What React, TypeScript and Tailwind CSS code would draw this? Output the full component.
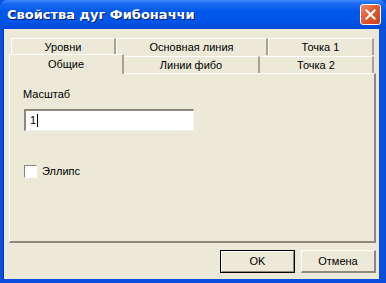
import React from "react";

const font = { fontFamily: '"Liberation Sans", Arial, sans-serif' };

function BackTab({ w, label }: { w: string; label: string }) {
  return (
    <div
      className={`${w} h-full flex items-center justify-center border-t border-l border-white border-r-2 border-r-[#a5a291] box-border`}
    >
      <span className="text-[11px] text-black leading-none">{label}</span>
    </div>
  );
}

export default function App() {
  return (
    <div className="w-[386px] h-[283px] flex flex-col bg-[#0a4fe0] overflow-hidden" style={font}>
      {/* Title bar */}
      <div className="h-[29px] flex items-center justify-between pl-[7px] pr-[5px] rounded-t-[7px] bg-[linear-gradient(to_bottom,#3d8ef9_0%,#1a6af0_12%,#0058ea_40%,#0055e6_75%,#0049d8_100%)]">
        <span
          className="text-white font-bold [text-shadow:1px_1px_#0a2080] mt-[1px]"
          style={{ fontFamily: '"DejaVu Sans", sans-serif', fontSize: "13px" }}
        >
          Свойства дуг Фибоначчи
        </span>
        <div className="w-[21px] h-[21px] rounded-[3px] border border-white bg-[linear-gradient(135deg,#ec8a68_0%,#e25b32_45%,#c8401a_100%)] flex items-center justify-center">
          <svg width="11" height="11" viewBox="0 0 11 11">
            <path d="M1.5 1.5 L9.5 9.5 M9.5 1.5 L1.5 9.5" stroke="white" strokeWidth="2.2" strokeLinecap="square" />
          </svg>
        </div>
      </div>

      {/* Client area */}
      <div className="flex-1 flex ml-[3px] mr-[7px] mb-[4px] border-l border-[#0830b8]">
        <div className="flex-1 bg-[#ece9d8] flex flex-col pl-[5px] pr-[3px] pt-[9px] pb-[6px]">
          {/* Tabs */}
          <div className="w-[367px] flex flex-col">
            <div className="h-[17px] flex pl-[2px]">
              <BackTab w="w-[105px]" label="Уровни" />
              <BackTab w="w-[152px]" label="Основная линия" />
              <BackTab w="w-[106px]" label="Точка 1" />
            </div>
            <div className="h-[18px] flex items-end relative">
              <div className="w-[115px] h-[20px] -mb-[1px] relative z-10 bg-[#ece9d8] flex items-center justify-center border-t border-l border-white border-r-2 border-r-[#a5a291] box-border pb-[1px]">
                <span className="text-[11px] text-black leading-none">Общие</span>
              </div>
              <div className="w-[136px] h-[17px] flex items-center justify-center border-t border-white border-r-2 border-r-[#a5a291] box-border">
                <span className="text-[11px] text-black leading-none">Линии фибо</span>
              </div>
              <div className="w-[114px] h-[17px] flex items-center justify-center border-t border-white border-r-2 border-r-[#a5a291] box-border">
                <span className="text-[11px] text-black leading-none">Точка 2</span>
              </div>
            </div>
            {/* Panel */}
            <div className="h-[170px] border-t border-l border-white border-r-2 border-b-2 border-r-[#8c8a7c] border-b-[#8c8a7c] box-border flex flex-col pl-[13px] pt-[14px]">
              <span className="text-[11px] text-black leading-[13px]">Масштаб</span>
              <div className="mt-[8px] ml-[1px] w-[170px] h-[22px] border-t-2 border-l-2 border-t-[#8a8878] border-l-[#8a8878] border-b border-r border-b-[#f4f3ee] border-r-[#f4f3ee] bg-white flex items-center pl-[4px]">
                <span className="text-[11px] text-black leading-none">1</span>
                <span className="w-[1px] h-[13px] bg-black ml-[1px]" />
              </div>
              <div className="mt-[34px] ml-[1px] flex items-center gap-[5px]">
                <div className="w-[13px] h-[13px] border-t border-l border-[#8a8878] border-b border-r border-b-white border-r-white bg-white box-border" />
                <span className="text-[11px] text-black leading-none">Эллипс</span>
              </div>
            </div>
          </div>
          {/* Buttons */}
          <div className="mt-[7px] flex justify-end gap-[6px]">
            <div className="w-[75px] h-[23px] border border-black box-border flex">
              <div className="flex-1 border-t border-l border-white border-b border-r border-b-[#8c8a7c] border-r-[#8c8a7c] flex items-center justify-center">
                <span className="text-[11px] text-black leading-none">OK</span>
              </div>
            </div>
            <div className="w-[75px] h-[23px] border-t border-l border-white border-b-2 border-r-2 border-b-[#8c8a7c] border-r-[#8c8a7c] box-border flex items-center justify-center">
              <span className="text-[11px] text-black leading-none">Отмена</span>
            </div>
          </div>
        </div>
      </div>
    </div>
  );
}
